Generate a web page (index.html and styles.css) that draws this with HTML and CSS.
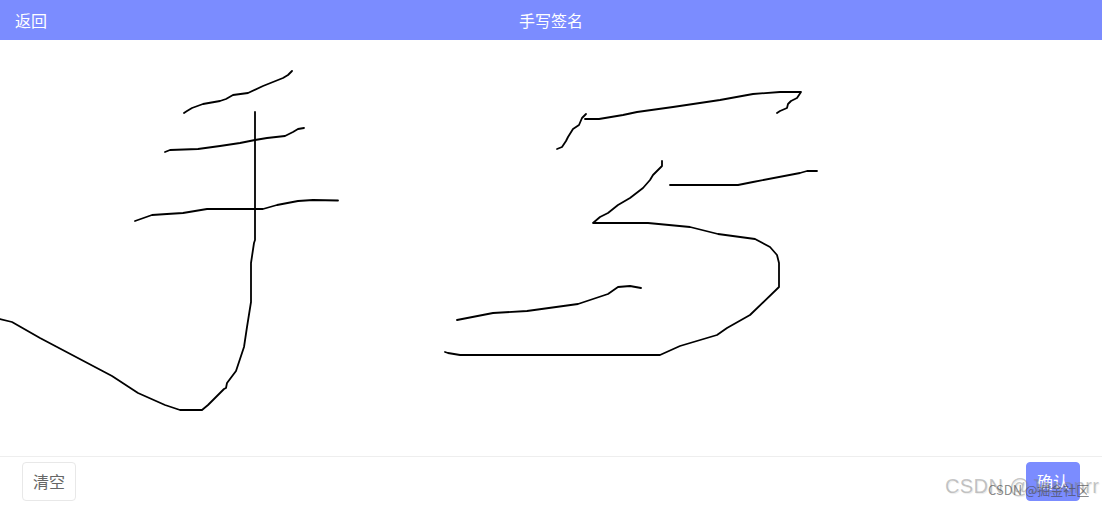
FILE: index.html
```html
<!DOCTYPE html>
<html lang="zh-CN">
<head>
<meta charset="utf-8">
<title>手写签名</title>
<link rel="stylesheet" href="styles.css">
</head>
<body>
<div class="page">
  <header class="topbar">
    <span class="back">返回</span>
    <span class="title">手写签名</span>
  </header>
  <main class="canvas">
    <svg class="ink" viewBox="0 0 1102 416" aria-hidden="true">
      <g transform="translate(0,-40)">
        <polyline points="184,113 187,111 192,108 203,104 220,101 226,99 233,95 248,93 263,86 283,78 288,75 292,71"/>
        <polyline points="165,152 170,150 198,149 220,146 240,143 255,140 267,138 285,136 293,132 298,129 304,128"/>
        <polyline points="135,221 152,215 167,214 183,213 207,209 263,209 277,205 298,201 313,200 338,200.5"/>
        <polyline points="255,112 255,240 254,243 251,263 251,302 247,327 244,347 236,371 227,383 226,388 224,389 208,405 202,410 180,410 165,405 138,393 112,376 40,338 12,322 0,319"/>
        <polyline points="557,149 562,147 566,141 568,137 573,129 579,125 582,118 586,114"/>
        <polyline points="585,119 599,119 623,115 637,112 673,107 720,100 753,94 780,92 801,92 797,98 791,101 788,104 787,108 780,111 777,113"/>
        <polyline points="670,185 738,185 753,182 800,173 807,171 817,171"/>
        <polyline points="662,161 662,166 653,175 650,180 643,188 630,198 618,205 608,213 600,217 593,223 648,223 690,227 718,234 755,239 770,247 777,255 779,263 779,287 750,315 727,328 717,335 680,346 660,355 460,355 448,353 445,352"/>
        <polyline points="457,320 493,313 527,311 578,304 608,294 618,287 630,286 641,288"/>
      </g>
    </svg>
  </main>
  <footer class="actions">
    <button class="btn">清空</button>
    <button class="btn primary">确认</button>
    <span class="mark mark-big">CSDN @Jasonrr</span>
    <span class="mark mark-small">CSDN @掘金社区</span>
  </footer>
</div>
</body>
</html>
```
FILE: styles.css
```css
* { box-sizing: border-box; }
html, body { margin: 0; padding: 0; background: #fff; }
body { font-family: "Noto Sans CJK SC", "Liberation Sans", sans-serif; }
.page { width: 1102px; height: 506px; display: flex; flex-direction: column; overflow: hidden; }
.topbar {
  height: 40px; flex: none; background: #7b8cff; color: #fff;
  font-size: 16px; line-height: 40px; padding: 0 15px;
  display: grid; grid-template-columns: 1fr auto 1fr;
}
.title { grid-column: 2; }
.back { grid-column: 1; }
.canvas { height: 416px; flex: none; }
.ink { display: block; width: 1102px; height: 416px; }
.ink polyline { fill: none; stroke: #000; stroke-width: 1.8; stroke-linejoin: round; stroke-linecap: round; }
.actions {
  position: relative; flex: 1; border-top: 1px solid #eee;
  display: flex; justify-content: space-between; align-items: flex-start;
  padding: 5px 22px 0;
}
.btn {
  width: 54px; height: 39px; padding: 0 0 2px; border: 1px solid #e8e8e8; border-radius: 4px;
  background: #fff; color: #666; font: 16px "Noto Sans CJK SC", sans-serif;
}
.primary { background: #7b8cff; border-color: #7b8cff; color: #fff; }
.mark { position: absolute; white-space: nowrap; }
.mark-big { left: 945px; top: 14px; font: 20px/30px "Liberation Sans", sans-serif; letter-spacing: 0.4px; color: rgba(130,130,130,.45); text-shadow: 1px 1px 1px rgba(0,0,0,.08); }
.mark-small { left: 988px; top: 24px; font: 13px/18px "Noto Sans CJK SC", sans-serif; color: rgba(70,70,70,.65); }
```
